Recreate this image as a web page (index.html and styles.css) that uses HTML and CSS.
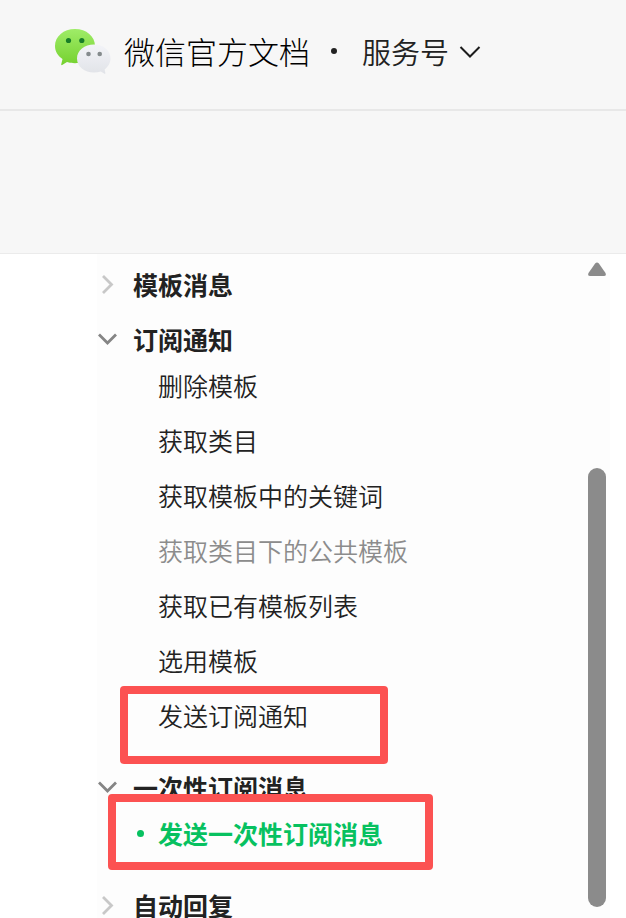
FILE: index.html
```html
<!doctype html>
<html lang="zh-CN">
  <head>
    <meta charset="utf-8" />
    <title>微信官方文档 · 服务号</title>
    <link rel="stylesheet" href="styles.css">
  </head>
  <body>
    <header class="header">
      <a class="brand" href="#">
        <svg class="logo" width="58" height="48" viewBox="0 0 58 48" aria-hidden="true">
          <defs>
            <linearGradient id="green" x1="0" y1="0" x2="0" y2="1">
              <stop offset="0" stop-color="#9fec68" />
              <stop offset="1" stop-color="#75d12f" />
            </linearGradient>
            <linearGradient id="grey" x1="0" y1="0" x2="0" y2="1">
              <stop offset="0" stop-color="#f3f4f8" />
              <stop offset="1" stop-color="#e1e3e8" />
            </linearGradient>
          </defs>
          <path fill="url(#green)" d="M21 2C9.500 2 1 9.500 1 19c0 5.500 3 10 7.500 13L7.200 37.500c0 .6.500.8 1 .5L13 35c2.500.8 5 1.200 8 1.200 11 0 20-7.700 20-17.200S32.500 2 21 2z" />
          <path fill="url(#grey)" d="M40 17.500c-9.500 0-17 6-17 14s7.500 14 17 14c2.500 0 4.700-.4 6.800-1L50.500 46.800c.6.300 1-.1.900-.7L50.600 42.500C54 40 56.500 36 56.500 31.500c0-8-7-14-16.500-14z" />
          <circle cx="14.500" cy="13.500" r="2.600" fill="#187e28" />
          <circle cx="27.800" cy="13.500" r="2.600" fill="#187e28" />
          <circle cx="34.500" cy="27" r="2.300" fill="#858b8d" />
          <circle cx="45.700" cy="27" r="2.300" fill="#858b8d" />
        </svg>
        <span class="brand-name">微信官方文档</span>
      </a>
      <span class="dot"></span>
      <button class="product" type="button">
        服务号
        <svg width="22" height="14" viewBox="0 0 22 14" aria-hidden="true">
          <path d="M1.500 3l9.500 9.500L20.500 3" fill="none" stroke="#1c1c1c" stroke-width="2" />
        </svg>
      </button>
    </header>
    <div class="subbar"></div>

    <main class="main">
      <nav class="sidebar">
        <section class="group">
          <button class="group-title" type="button">
            <svg class="arrow" width="20" height="20" viewBox="0 0 20 20" aria-hidden="true">
              <path d="M6 2l8.500 8.500L6 19" fill="none" stroke="#c8c8c8" stroke-width="2.800" />
            </svg>
            模板消息
          </button>
        </section>

        <section class="group">
          <button class="group-title" type="button">
            <svg class="arrow" width="20" height="20" viewBox="0 0 20 20" aria-hidden="true">
              <path d="M2 5.500l8.500 8.500L19 5.500" fill="none" stroke="#858585" stroke-width="2.800" />
            </svg>
            订阅通知
          </button>
          <ul class="list">
            <li><a href="#">删除模板</a></li>
            <li><a href="#">获取类目</a></li>
            <li><a href="#">获取模板中的关键词</a></li>
            <li><a class="muted" href="#">获取类目下的公共模板</a></li>
            <li><a href="#">获取已有模板列表</a></li>
            <li><a href="#">选用模板</a></li>
            <li class="marked"><a href="#">发送订阅通知</a><span class="frame"></span></li>
          </ul>
        </section>

        <section class="group">
          <button class="group-title" type="button">
            <svg class="arrow" width="20" height="20" viewBox="0 0 20 20" aria-hidden="true">
              <path d="M2 5.500l8.500 8.500L19 5.500" fill="none" stroke="#858585" stroke-width="2.800" />
            </svg>
            一次性订阅消息
          </button>
          <ul class="list">
            <li class="marked"><a class="active" href="#">发送一次性订阅消息</a><span class="frame frame-wide"></span></li>
          </ul>
        </section>

        <section class="group">
          <button class="group-title" type="button">
            <svg class="arrow" width="20" height="20" viewBox="0 0 20 20" aria-hidden="true">
              <path d="M6 2l8.500 8.500L6 19" fill="none" stroke="#c8c8c8" stroke-width="2.800" />
            </svg>
            自动回复
          </button>
        </section>
      </nav>

      <div class="scrollbar">
        <svg width="20" height="16" viewBox="0 0 20 16" aria-hidden="true">
          <path d="M8.300 2.200q1.700-1.600 3.400 0L18.500 12q1.200 3-1.500 3H3q-2.700 0-1.500-3z" fill="#8b8b8b" />
        </svg>
        <div class="thumb"></div>
      </div>
    </main>
  </body>
</html>
```

FILE: styles.css
```css
* {
  box-sizing: border-box;
}

body {
  display: flex;
  flex-direction: column;
  height: 100vh;
  margin: 0;
  overflow: hidden;
  background: #fff;
  color: #222;
  font-family: "Noto Sans CJK SC", sans-serif;
}

a {
  color: inherit;
  text-decoration: none;
}

button {
  padding: 0;
  border: 0;
  background: none;
  color: inherit;
  font-family: inherit;
  cursor: pointer;
}

.header {
  display: flex;
  flex: none;
  align-items: center;
  height: 111px;
  padding: 0 54px 8px;
  border-bottom: 2px solid #e8e8e8;
  background: #f7f7f7;
}

.brand {
  display: flex;
  align-items: center;
  gap: 12px;
  color: #000;
}

.brand-name {
  font-size: 31px;
  font-weight: 300;
  line-height: 40px;
}

.dot {
  width: 6px;
  height: 6px;
  margin: 0 25px 0 21px;
  border-radius: 50%;
  background: #222;
}

.product {
  display: flex;
  align-items: center;
  gap: 10px;
  font-size: 29px;
  font-weight: 350;
  line-height: 40px;
}

.subbar {
  flex: none;
  height: 143px;
  border-bottom: 1px solid #ebebeb;
  background: #f7f7f7;
}

.main {
  display: flex;
  flex: 1;
  min-height: 0;
  margin: 0 16px 0 97px;
  background: #fdfdfd;
}

.sidebar {
  flex: 1;
  padding-top: 12px;
}

.group {
  margin-bottom: 19px;
}

.group-title {
  display: flex;
  align-items: center;
  gap: 16px;
  height: 36px;
  font-size: 25px;
  font-weight: 700;
}

.list {
  display: flex;
  flex-direction: column;
  gap: 24px;
  margin: 0;
  padding: 13px 0 19px 61px;
  font-size: 25px;
  font-weight: 350;
  line-height: 31px;
  list-style: none;
}

.list a {
  display: block;
}

.list .muted {
  color: #8c8c8c;
}

.list .active {
  display: flex;
  align-items: center;
  gap: 14px;
  margin-left: -21px;
  color: #07c160;
  font-weight: 700;
}

.active::before {
  content: "";
  width: 7px;
  height: 7px;
  border-radius: 50%;
  background: #07c160;
}

.marked {
  position: relative;
}

.frame {
  position: absolute;
  top: -14px;
  left: -38px;
  width: 268px;
  height: 78px;
  border: 8px solid #fc5252;
  border-radius: 4px;
  pointer-events: none;
}

.frame-wide {
  top: -24px;
  left: -50px;
  width: 325px;
  height: 76px;
}

.scrollbar {
  display: flex;
  flex-direction: column;
  justify-content: space-between;
  align-items: center;
  width: 26px;
  padding: 7px 0 11px;
}

.thumb {
  width: 18px;
  height: 68%;
  border-radius: 9px;
  background: #8b8b8b;
}
```
